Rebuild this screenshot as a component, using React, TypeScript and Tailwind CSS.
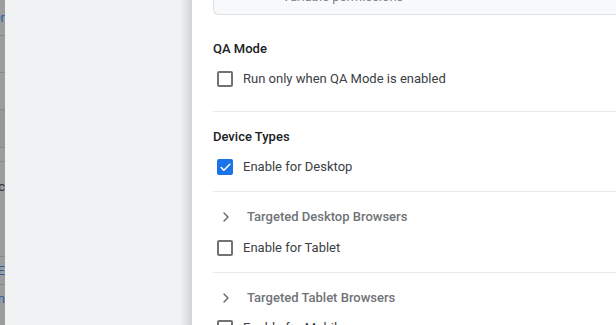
import { Check, ChevronRight } from 'lucide-react';

function Checkbox({ checked, label }: { checked?: boolean; label: string }) {
    return (
        <div className="flex h-[30px] items-center gap-[10px] pl-[4px] pt-[2px]">
            {checked ? (
                <div className="flex h-[16px] w-[16px] items-center justify-center rounded-[2px] bg-[#1a73e8]">
                    <Check size={13} strokeWidth={3} className="text-white" />
                </div>
            ) : (
                <div className="h-[16px] w-[16px] rounded-[2px] border-2 border-[#6f7377]" />
            )}
            <span className="text-[13px] text-[#3c4043]">{label}</span>
        </div>
    );
}

function Expander({ label }: { label: string }) {
    return (
        <div className="flex h-[30px] items-center gap-[13px] pl-[5px] pt-[2px]">
            <ChevronRight size={16} strokeWidth={2} className="text-[#5f6368]" />
            <span className="text-[13px] font-medium text-[#6f7377]">{label}</span>
        </div>
    );
}

export default function App() {
    return (
        <div className="flex h-[325px] w-[616px] overflow-hidden bg-white font-['Roboto',sans-serif]">
            {/* page behind the dialog, dimmed */}
            <div className="flex w-[5px] shrink-0 flex-col overflow-hidden bg-[#9d9d9d] text-[13px]">
                <div className="flex h-[36px] shrink-0 items-center justify-end whitespace-nowrap border-b border-[#8a8a8a] text-[#2f5aa8]">
                    Filter
                </div>
                <div className="h-[37px] shrink-0 border-b border-[#8a8a8a]" />
                <div className="h-[37px] shrink-0 border-b border-[#8a8a8a]" />
                <div className="h-[38px] shrink-0 border-b border-[#8a8a8a] bg-[#979797]" />
                <div className="h-[14px] shrink-0 border-b border-[#8a8a8a]" />
                <div className="flex h-[34px] shrink-0 items-end justify-end whitespace-nowrap text-[#333]">
                    Selec
                </div>
                <div className="h-[61px] shrink-0 border-b border-[#8a8a8a]" />
                <div className="flex h-[28px] shrink-0 items-center justify-end whitespace-nowrap border-b border-[#8a8a8a] text-[#2f5aa8]">
                    TE
                </div>
                <div className="flex h-[28px] shrink-0 items-center justify-end whitespace-nowrap text-[#2f5aa8]">
                    Com
                </div>
            </div>
            <div className="flex w-[187px] shrink-0">
                <div className="flex-1 bg-[#f1f2f4]" />
                <div className="w-[12px] bg-gradient-to-r from-[#f1f2f4] to-[#d2d3d5]" />
            </div>
            <div className="min-w-0 flex-1 overflow-hidden pl-[21px]">
                <div className="h-[15px] overflow-hidden rounded-bl-[6px] border-b border-l border-[#dfe1e5] bg-[#f8f9fa]">
                    <div className="-mt-[11px] pl-[68px] text-[13px] leading-[16px] text-[#80868b]">
                        Variable permissions
                    </div>
                </div>

                <div className="mt-[23px] flex h-[20px] items-center pt-[2px] text-[13px] font-medium text-[#202124]">
                    QA Mode
                </div>
                <div className="mt-[5px]">
                    <Checkbox label="Run only when QA Mode is enabled" />
                </div>
                <div className="mt-[18px] border-t border-[#e8eaed]" />

                <div className="mt-[14px] flex h-[20px] items-center pt-[2px] text-[13px] font-medium text-[#202124]">
                    Device Types
                </div>
                <div className="mt-[5px]">
                    <Checkbox checked label="Enable for Desktop" />
                </div>
                <div className="mt-[10px] border-t border-[#e8eaed]" />
                <div className="mt-[9px]">
                    <Expander label="Targeted Desktop Browsers" />
                </div>
                <div className="mt-[1px]">
                    <Checkbox label="Enable for Tablet" />
                </div>
                <div className="mt-[10px] border-t border-[#e8eaed]" />
                <div className="mt-[9px]">
                    <Expander label="Targeted Tablet Browsers" />
                </div>
                <Checkbox label="Enable for Mobile" />
            </div>
        </div>
    );
}
